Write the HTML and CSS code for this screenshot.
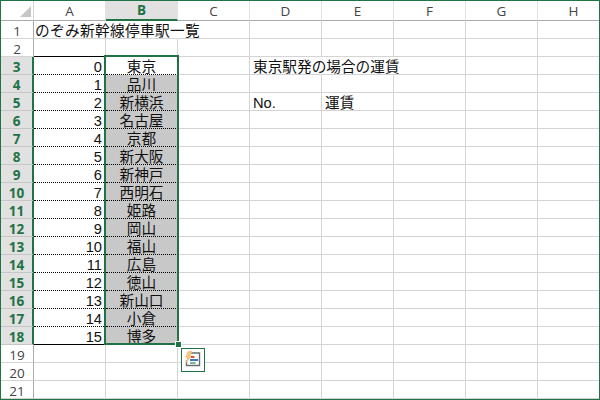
FILE: index.html
```html
<!DOCTYPE html>
<html lang="ja">
<head>
<meta charset="utf-8">
<title>のぞみ新幹線停車駅一覧</title>
<link rel="stylesheet" href="styles.css">
</head>
<body>
<div class="sheet">
<table class="grid">
<thead>
<tr><th class="corner"><span class="tri"></span></th><th class="col">A</th><th class="col sel">B</th><th class="col">C</th><th class="col">D</th><th class="col">E</th><th class="col">F</th><th class="col">G</th><th class="col">H</th></tr>
</thead>
<tbody>
<tr><th class="row">1</th><td class="flow title">のぞみ新幹線停車駅一覧</td><td class="flow"></td><td></td><td></td><td></td><td></td><td></td><td></td></tr>
<tr><th class="row">2</th><td class="topline"></td><td></td><td></td><td></td><td></td><td></td><td></td><td></td></tr>
<tr><th class="row on">3</th><td class="num">0</td><td class="st first">東京</td><td></td><td class="flow">東京駅発の場合の運賃</td><td class="flow"></td><td></td><td></td><td></td></tr>
<tr><th class="row on">4</th><td class="num">1</td><td class="st">品川</td><td></td><td></td><td></td><td></td><td></td><td></td></tr>
<tr><th class="row on">5</th><td class="num">2</td><td class="st">新横浜</td><td></td><td>No.</td><td>運賃</td><td></td><td></td><td></td></tr>
<tr><th class="row on">6</th><td class="num">3</td><td class="st">名古屋</td><td></td><td></td><td></td><td></td><td></td><td></td></tr>
<tr><th class="row on">7</th><td class="num">4</td><td class="st">京都</td><td></td><td></td><td></td><td></td><td></td><td></td></tr>
<tr><th class="row on">8</th><td class="num">5</td><td class="st">新大阪</td><td></td><td></td><td></td><td></td><td></td><td></td></tr>
<tr><th class="row on">9</th><td class="num">6</td><td class="st">新神戸</td><td></td><td></td><td></td><td></td><td></td><td></td></tr>
<tr><th class="row on">10</th><td class="num">7</td><td class="st">西明石</td><td></td><td></td><td></td><td></td><td></td><td></td></tr>
<tr><th class="row on">11</th><td class="num">8</td><td class="st">姫路</td><td></td><td></td><td></td><td></td><td></td><td></td></tr>
<tr><th class="row on">12</th><td class="num">9</td><td class="st">岡山</td><td></td><td></td><td></td><td></td><td></td><td></td></tr>
<tr><th class="row on">13</th><td class="num">10</td><td class="st">福山</td><td></td><td></td><td></td><td></td><td></td><td></td></tr>
<tr><th class="row on">14</th><td class="num">11</td><td class="st">広島</td><td></td><td></td><td></td><td></td><td></td><td></td></tr>
<tr><th class="row on">15</th><td class="num">12</td><td class="st">徳山</td><td></td><td></td><td></td><td></td><td></td><td></td></tr>
<tr><th class="row on">16</th><td class="num">13</td><td class="st">新山口</td><td></td><td></td><td></td><td></td><td></td><td></td></tr>
<tr><th class="row on">17</th><td class="num">14</td><td class="st">小倉</td><td></td><td></td><td></td><td></td><td></td><td></td></tr>
<tr><th class="row on">18</th><td class="num last">15</td><td class="st">博多</td><td></td><td></td><td></td><td></td><td></td><td></td></tr>
<tr><th class="row">19</th><td></td><td></td><td></td><td></td><td></td><td></td><td></td><td></td></tr>
<tr><th class="row">20</th><td></td><td></td><td></td><td></td><td></td><td></td><td></td><td></td></tr>
<tr><th class="row">21</th><td></td><td></td><td></td><td></td><td></td><td></td><td></td><td></td></tr>
</tbody>
</table>
<div class="selection"><span class="handle"></span></div>
<div class="quick">
<svg width="22" height="22" viewBox="1 1 22 22" aria-hidden="true">
<path d="M10 5h8.500v12.500H5.500V12" fill="#fff" stroke="#6e6e6e" stroke-width="1.400"/>
<path d="M7 3h4.500L9 7.500h2.500L4.500 15.500l1.500-6H4z" fill="#f5c77e"/>
<rect x="10" y="8" width="3.500" height="2" fill="#e0533d"/>
<rect x="9" y="11" width="8" height="2" fill="#3f78bd"/>
<rect x="9" y="14" width="5.500" height="2" fill="#79b7a3"/>
</svg>
</div>
</div>
</body>
</html>
```
FILE: styles.css
```css
* { box-sizing: border-box; }
html, body { margin: 0; padding: 0; background: #fff; }
.sheet {
  position: relative;
  width: 600px;
  height: 400px;
  border: 1px solid #217346;
  overflow: hidden;
}
.grid {
  border-collapse: separate;
  border-spacing: 0;
  table-layout: fixed;
  width: 609px;
  font-family: "Liberation Sans", "Noto Sans CJK JP", sans-serif;
  font-size: 14.67px;
  color: #111;
}
.grid th {
  padding: 0;
  font-weight: normal;
  font-family: "Open Sans", "Liberation Sans", sans-serif;
  font-size: 13.5px;
  line-height: 16px;
  color: #444;
}
.grid td {
  height: 18px;
  padding: 3px 0 0 3px;
  border-right: 1px solid #d4d4d4;
  border-bottom: 1px solid #d4d4d4;
  white-space: nowrap;
  line-height: 14px;
  overflow: visible;
}
.grid td.title { padding-left: 1px; letter-spacing: 0.35px; }
.corner { width: 33px; height: 20px; position: relative; border-right: 1px solid #d4d4d4; border-bottom: 1px solid #ababab; }
.tri {
  position: absolute;
  right: 2px;
  bottom: 3px;
  width: 0;
  height: 0;
  border-style: solid;
  border-width: 0 0 11px 11px;
  border-color: transparent transparent #c6c6c6 transparent;
}
.col { width: 72px; height: 20px; border-right: 1px solid #e2e2e2; border-bottom: 1px solid #ababab; }
.grid .col.sel { background: #e1e1e1; color: #217346; font-weight: 700; border-bottom: 2px solid #217346; }
.grid .row { width: 33px; height: 18px; padding-top: 3px; line-height: 14px; border-right: 1px solid #ababab; border-bottom: 1px solid #d4d4d4; }
.grid .row.on {
  background: #e1e1e1;
  color: #217346;
  font-weight: 700;
  border-right: 2px solid #217346;
  border-bottom-color: #c6c6c6;
}
.grid td.flow { border-right-color: transparent; }
.grid td.topline { border-bottom-color: #000; }
.grid td.num {
  padding: 3px 3px 0 0;
  text-align: right;
  border-right: 1px solid #d4d4d4;
  border-bottom: 1px dotted #000;
}
.grid td.num.last { border-bottom: 1px solid #000; }
.grid td.st {
  padding: 3px 0 0;
  text-align: center;
  background: #c8c8c8;
  border-bottom: 1px dotted #000;
}
.grid td.st.first { background: #fff; }
.selection {
  position: absolute;
  left: 103px;
  top: 54px;
  width: 75px;
  height: 290px;
  border: 2px solid #217346;
}
.handle {
  position: absolute;
  right: -5px;
  bottom: -5px;
  width: 7px;
  height: 7px;
  background: #217346;
  border: 1px solid #fff;
}
.quick {
  position: absolute;
  left: 180px;
  top: 347px;
  width: 24px;
  height: 24px;
  display: flex;
  align-items: center;
  justify-content: center;
  background: #fff;
  border: 1px solid #217346;
}
```
